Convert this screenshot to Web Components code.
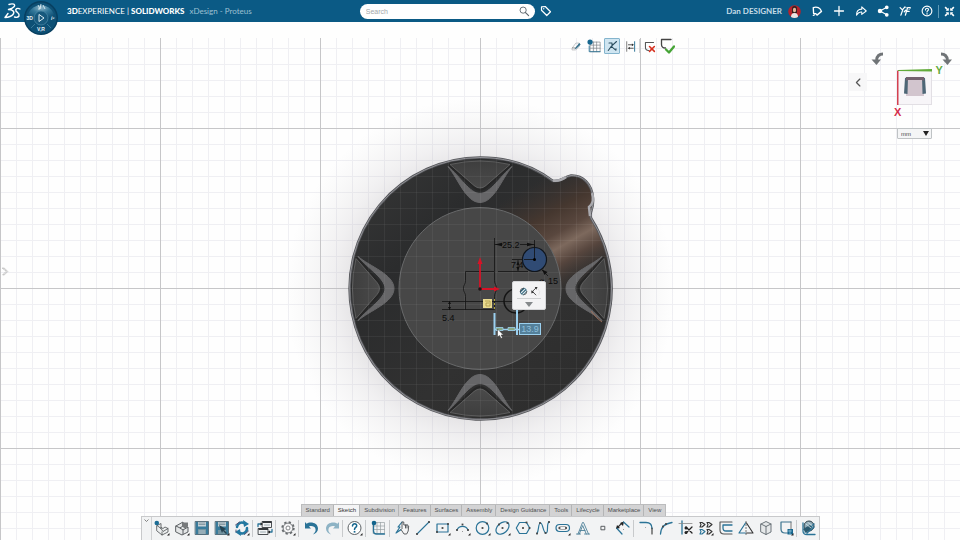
<!DOCTYPE html>
<html lang="en">
<head>
<meta charset="utf-8">
<title>3DEXPERIENCE | SOLIDWORKS xDesign - Proteus</title>
<style>
html,body{margin:0;height:100%}
body{font-family:"Liberation Sans",Arial,sans-serif;background:#fefefe;overflow:hidden}
</style>
</head>
<body>
<xd-app></xd-app>
<script>
const B='#2a7397',D='#4b4f52';
const dot=(x,y)=>`<rect x="${x-.9}" y="${y-.9}" width="1.8" height="1.8" fill="#444"/>`;
const more='<path d="M15.5 13v2.5H13z" fill="#222"/>';
const L=(d,c=B,w=1.1)=>`<path d="${d}" fill="none" stroke="${c}" stroke-width="${w}" stroke-linejoin="round" stroke-linecap="round"/>`;
const F=(d,c)=>`<path d="${d}" fill="${c}"/>`;
const ICONS={
newpart:F('M3 6l4-2 1 4 3-1 3 2v3l-6 3-5-4z','#eceeef')+L('M3 5.5l4-2v4l2 1 2-1.5 3 1.500v3.500l-6 3-5-4zM3 5.500l4 3 2 3 5-3M8 12v3M7 8.500v-1',D,.8)+'<circle cx="2.800" cy="3" r="2.300" fill="#1d6d95"/>'+more,
open:F('M2 6l7-4 5 3v7l-6 3-6-3z','#e4e6e7')+L('M2 6l7-4v4l-3 2 3 2 5-3v5l-6 3-6-3zM2 6l4 2M9 10v4',D,.9)+F('M8 2.500h6v4l-3 2-3-2z','#777a7c')+more,
save:F('M1.500 1.500h13v13h-13z','#397b9b')+F('M4 1.500h8v5H4z','#c7d2d7')+L('M5 3h6M5 4.500h6','#6c8590',.7)+F('M4 9h8v5.500H4z','#7393a0')+L('M5 11h6M5 13h6','#d7e0e4',.7)+L('M1.500 1.500h13v13h-13z','#49606c',.8),
saveas:F('M1.500 1.500h13v13h-13z','#397b9b')+F('M4 1.500h8v5H4z','#c7d2d7')+L('M5 3h6M5 4.500h6','#6c8590',.7)+F('M4 10h8v4.500H4z','#7393a0')+L('M1.500 1.500h13v13h-13z','#49606c',.8)+F('M5 5l7 4-2 1 3 3-1 1-3-3-1 2z','#264250')+more,
refresh:L('M3 7a5 5 0 0 1 7-4M13 8a5 5 0 0 1-7 5','#2378a0',2.500)+F('M9 0l6 4-5 3zM7 16L1 12l5-3z','#2378a0')+L('M1.500 5l4-3M14.500 11l-4 3.500M2 10v2','#557',1)+more,
views:L('M5.500 1.500h9v6h-9z',D,1)+L('M1.500 8.500h9.500v6H1.500z',D,1)+F('M5.500 1h9v2h-9zM1.500 8H11v2H1.500z','#35393c')+L('M1 6.500V4h3M15 9.500V12h-2.500',B,1.300)+F('M3.500 2.500L6 4 3.500 5.500zM13 10.500L10.500 12l2.500 1.500z','#222')+L('M7.500 5h5M3.500 12h5','#87979e',.8),
gear:'<circle cx="8" cy="8" r="5.600" fill="none" stroke="#676b6e" stroke-width="2.200" stroke-dasharray="2.200 2.198"/><circle cx="8" cy="8" r="4.900" fill="#f4f4f5" stroke="#676b6e" stroke-width=".9"/><circle cx="8" cy="8" r="2" fill="#fff" stroke="#676b6e" stroke-width=".8"/>'+more,
undo:F('M1 2l1.500 1.800C6 1 14 2.500 14 8.500c0 3-2 5-5 6 2-2 3-3.500 2.500-5.500C11 6 7 5.500 5 6.500L7 8.500H1z','#2a7397'),
redo:F('M15 2l-1.500 1.800C10 1 2 2.500 2 8.500c0 3 2 5 5 6-2-2-3-3.500-2.500-5.500C5 6 9 5.500 11 6.500L9 8.500h6z','#8db3c5'),
help:'<circle cx="7.500" cy="8" r="6.500" fill="#fff" stroke="#5c6165" stroke-width="1"/>'+L('M5.500 6c0-3 4.500-2.700 4.200-.2C9.500 7.500 7.500 7.300 7.500 9.500','#17678f',1.500)+F('M6.700 11h1.700v1.600H6.700z','#17678f')+more,
grid:L('M2.500 2.500h11v11h-11zM2.500 6h11M2.500 9.500h11M6 2.500v11M9.500 2.500v11','#9aa0a4',.7)+L('M2.500 4v7q0 3 3 3h8',B,1.300)+'<circle cx="3" cy="3" r="2.300" fill="#12648c"/>',
sketch:L('M7 2L3 7l2 0-4 6 6-4',B,1.200)+F('M7 6V2h1.800v3h4.500l1 5-2 4H9L6 9z','#f5f5f5')+L('M7 7V2h1.800v3h3.700l1.200 1-.5 5-1.500 3H9L6 9.500l1-1zM10.500 5v3M12 5v3',D,.9),
line:L('M2 14L14 2')+dot(2,14)+dot(14,2),
rect:L('M2 4h11v8H2z',B,1.200)+dot(13,4)+dot(2,12)+dot(7.500,8)+more,
arc:L('M2 10a6 6 0 0 1 11 0',B,1.200)+dot(2,10)+dot(13,10)+dot(7.500,4.500)+F('M7 11h1v1H7z','#999')+more,
circle:'<circle cx="7.500" cy="8" r="6.300" fill="none" stroke="#2a7397" stroke-width="1.200"/>'+dot(7.500,8)+dot(12,3.500)+more,
ellipse:'<ellipse cx="7.500" cy="8" rx="7.500" ry="5" transform="rotate(-42 7.500 8)" fill="none" stroke="#2a7397" stroke-width="1.200"/>'+dot(7.500,8)+dot(12.500,3)+dot(4,4.500)+more,
poly:L('M4.500 2.500h7l3.200 5.500-3.200 5.500h-7L1.300 8z',B,1.200)+dot(8,8)+dot(11.500,2.500)+dot(14.500,8),
spline:L('M2 13.500C4 11 3 3 5.500 3S8 13 11 13 11 4 14 2',B,1.200)+dot(2,13.500)+dot(5,3)+dot(10.500,13)+dot(14,2),
slot:'<rect x="1" y="4.500" width="13.500" height="7" rx="3.500" fill="none" stroke="#2a7397" stroke-width="1.200"/><rect x="4" y="6.500" width="7.500" height="3" rx="1.500" fill="none" stroke="#777" stroke-width=".6"/>'+dot(4.500,8)+dot(11,8)+more,
letter:L('M1.500 14h4M9.500 14h5M3 14L7.500 2.500h1L13.500 14M11.300 14L7.700 5.500 4.300 14M5 10.500h5','#4d8098',.9),
point:L('M6.300 6.300h3.500v3.500H6.300z',D,.9),
dimension:L('M2 8l5-5','#333',1.100)+F('M1 9l1-4 3 3zM9 1.500L5 3l3 3z','#222')+L('M8.500 2L14 7M2 8.500L7 14',B,1.200)+F('M8 9h1v1H8z','#999'),
fillet:L('M2 2.500h6q6 0 6 6',B,1.300)+L('M14 8v6','#333',1.100)+F('M7 7h1v1H7z','#aaa'),
corner:L('M2.500 14C3 7 6 4 14 2.500',B,1.300)+dot(5,6.500)+dot(8,4),
trim:L('M4 1v13',B,1.300)+L('M1 3.500h13','#888',.8)+L('M8 7l6 6M14 7l-6 6','#222',1.300)+'<circle cx="8" cy="8" r="1.500" fill="#222"/><circle cx="8" cy="12.500" r="1.500" fill="#222"/>',
pattern:['2 2','9 2','2 9','9 9'].map((p,i)=>`<g transform="translate(${p})">${L('M0 .5h2l3 2-3 2.500H0l1-2.500z',i===2?B:'#333',1.100)}</g>`).join('')+more,
offset:L('M14 14H6q-4 0-4-4V2h12','#555',1.100)+L('M14 11H8q-3 0-3-3V5h9',B,1.300),
mirror:L('M7.500 3L1 13h6.500',B,1.200)+L('M8.500 3L15 13H8.500','#333',1.100)+'<path d="M8 1v14" stroke="#555" stroke-width=".8" stroke-dasharray="2 1"/>',
cube:F('M3 4l5-2.500L13 4v8l-5 2.500L3 12z','#e5e8e9')+L('M3 4l5-2.500L13 4v8l-5 2.500L3 12zM3 4l5 2.500L13 4M8 6.500v8','#5d686d',.9),
convert:L('M13 2H3v7q0 4 4 4h3','#3a738e',1.200)+L('M13 2v7','#777',1)+F('M9.500 9h5.500v5.500H9.500z','#17678f')+L('M10.500 11h3M12 10v4','#b6dcec',.6)+more,
appearance:'<circle cx="8" cy="6" r="5" fill="#8fabb7" stroke="#2e4049" stroke-width="1"/>'+L('M2 3v8q0 3.500 4 3.500h8M4 12L13 4M6 13l7-6',B,1.300)+F('M2 9l7-4 2 3-6 5z','#2b5a6f')+L('M5 4l5 4M7 2.500l4 3','#dbe6ea',.8),
tag:L('M2 2.500l5-.5 7 7-5 5-7-7z','#fff',1.600)+'<circle cx="5" cy="5" r=".9" fill="#fff"/>',
search:'<circle cx="6" cy="6" r="4.500" fill="none" stroke="#59636a" stroke-width="1.300"/>'+L('M9.500 9.500L14 14','#59636a',1.600),
note:L('M3 3.500c5-2 9.500.5 11 5L8 13.500l-1.500-2H3.500z','#fff',1.800)+L('M3 14l2-1','#fff',1.500),
plus:L('M8 2v12M2 8h12','#fff',1.700),
share:L('M2 13.500C2 8 5 5.500 9 5.500V2.500L15 8l-6 4.500V9.500C6 9 4 10.500 2 13.500z','#fff',1.400),
nodes:L('M13 3L4 8l9 5','#fff',1.500)+F('M1 8a3 3 0 0 1 6 0 3 3 0 0 1-6 0zM10.500 3a2.500 2.500 0 0 1 5 0 2.500 2.500 0 0 1-5 0zM10.500 13a2.500 2.500 0 0 1 5 0 2.500 2.500 0 0 1-5 0z','#fff'),
tools:L('M1.500 3.500l3 3 3.500-4M5 6.500L2.500 13.500M8.500 13.500l3-10h3.500M10 8.500h3.500M7 9l2-2','#fff',1.700)+L('M9 3l1 1M13.500 6l1-1','#fff',1.300),
question:'<circle cx="8" cy="8" r="6.500" fill="none" stroke="#fff" stroke-width="1.500"/>'+L('M6 6.500c0-3 4.200-2.500 4-.3C9.800 7.500 8 7.500 8 9.300','#fff',1.500)+F('M7.200 11h1.700v1.600H7.200z','#fff'),
collapse:F('M7 7V2.500L5.600 3.900 2.500.8.800 2.500l3.100 3.100L2.500 7zM9 7V2.500l1.400 1.400L13.500.8l1.700 1.700-3.100 3.100L13.500 7zM7 9v4.500l-1.400-1.400-3.100 3.100-1.700-1.700 3.100-3.100L2.500 9zM9 9v4.500l1.400-1.400 3.100 3.100 1.700-1.700-3.100-3.100L13.500 9z','#fff'),
pencil:L('M2 10l5-7h5v5l-5 5H2z','#a5a9ac',.9)+F('M6 10l6-7 2 2-6 6-3 1z','#356f8b')+L('M2 10h4','#777',1),
gridset:L('M4 3.500h11v11H4zM4 7h11M4 10.500h11M7.500 3.500v11M11 3.500v11','#7f8589',.8)+'<circle cx="3.500" cy="3.500" r="3" fill="#17678f"/>'+L('M2.500 8v6.500H15',B,1),
snap:L('M3 14l4-5.500L14 2M7 8.500l6 5M4 4h4v4','#294c5e',1.400)+F('M11 12l3-1v3z','#294c5e'),
width:L('M2.500 1v14','#444',1)+L('M14 1v14',B,1.400)+L('M5 5.500h6M6 10.500h6','#333',1.200)+F('M10 3.500l3 2-3 2zM7 8.500l-3 2 3 2z','#333'),
cancel:L('M13 3H3v6q0 4 4 4','#555',1.300)+L('M8 8l6 6M14 8l-6 6','#d6301f',1.900),
accept:L('M12 1.500H2.500v5q0 3.500 4 3.500','#444',1.300)+L('M7 11.500l3 3 5-6','#46a436',2.300),
smart:'<rect x="3" y="4" width="10" height="8" rx="3" transform="rotate(-45 8 8)" fill="#265d76"/>'+L('M5 9.500l5-5M7 12l5-5','#dfe9ec',1.700)+L('M3 8a5 5 0 0 1 5-5M13 8a5 5 0 0 1-5 5','#444',1),
radial:L('M9 2.500L3.500 8l5 5','#444',1.400)+F('M7 1.500l4 0-2 4zM2 6v5l4-2z','#333')+L('M12 4q4 4 1 9','#ddd',1),
left:L('M10 3L5 8l5 5','#555',1.800),
more:F('M0 4h16L8 14z','#85898b'),
panel:L('M3 2h3l6 6-6 6H3l6-6z','#999',1)
};
const icon=(n,s=16)=>`<svg viewBox="0 0 16 16" width="${s}" height="${s}" aria-hidden="true">${ICONS[n]}</svg>`;
const define=(tag,html,after)=>{
  const t=document.createElement('template');t.innerHTML=html;
  customElements.define(tag,class extends HTMLElement{
    constructor(){super();this.attachShadow({mode:'open'}).append(t.content.cloneNode(true))}
    connectedCallback(){if(after)after(this,this.shadowRoot)}
  });
};
const tools=(list,size='')=>list.split(' ').map(n=>n==='|'?'<i></i>':n==='||'?'<i class="wide"></i>':`<xd-tool icon="${n}" ${size}></xd-tool>`).join('');

define('xd-tool',`<style>
:host{display:block;flex:none;width:var(--tool-w,20px);height:var(--tool-h,20px)}
button{display:flex;align-items:center;justify-content:center;width:100%;height:100%;box-sizing:border-box;padding:0;border:0;background:none}
:host([active]) button{background:#cfe5f1;border:1px solid #84b4cd;border-radius:1px}
svg{display:block;flex:none}
</style><button type="button"></button>`,(h,r)=>{const b=r.querySelector('button');b.setAttribute('aria-label',h.getAttribute('icon'));b.innerHTML=icon(h.getAttribute('icon'),h.getAttribute('size')||16)});

define('xd-compass',`<style>:host{display:block;width:36px;height:36px}button{padding:0;border:0;background:none;display:block}svg{display:block}</style>
<button type="button" aria-label="Compass"><svg width="36" height="36" viewBox="0 0 36 36">
<defs><radialGradient id="g" cx=".5" cy=".15" r=".75"><stop offset="0" stop-color="#8fb6c9"/><stop offset=".45" stop-color="#34799b"/><stop offset="1" stop-color="#0a4b70"/></radialGradient></defs>
<circle cx="18" cy="18" r="17" fill="#073f60"/><circle cx="18" cy="18" r="15.500" fill="#0d5075"/>
<path d="M5 14A14 14 0 0 1 31 14Q27 21 18 21T5 14z" fill="url(#g)"/>
<circle cx="18" cy="18" r="7" fill="#17597d" stroke="#4d8ba9" stroke-width=".7"/>
<path d="M8 28l4-4M28 28l-4-4" stroke="#4d8ba9" stroke-width=".7"/>
<path d="M16 14.500v7l5-3.500z" fill="none" stroke="#dcecf3" stroke-width="1"/>
<path d="M15 5l2 4M18 4l-1 5M20 5l2 4M15 9h2" stroke="#dcecf3" stroke-width=".9" fill="none"/>
<g fill="#e8f3f8" font-family="Liberation Sans,Arial,sans-serif" font-weight="700" font-size="5"><text x="3.500" y="20">3D</text><text x="28" y="20" font-style="italic">i²</text><text x="18" y="31" text-anchor="middle">V,R</text></g>
</svg></button>`);

define('xd-search',`<style>:host{display:block}
form{margin:0;display:flex;align-items:center;height:15px;border-radius:8px;background:#fff;padding:0 3px 0 6px}
input{flex:1;min-width:0;border:0;padding:0;background:none;outline:0;font:7px "Liberation Sans",Arial,sans-serif}
input::placeholder{color:#a2a7aa;opacity:1}xd-tool{--tool-w:14px;--tool-h:14px}</style>
<form role="search"><input type="text" aria-label="Search" placeholder="Search"><xd-tool icon="search" size="11"></xd-tool></form>`);

define('xd-topbar',`<style>
:host{display:flex;align-items:center;height:22px;background:#0b5a85;color:#fff;font-family:Lato,"Open Sans",sans-serif;position:relative;z-index:2}
.side{flex:13;display:flex;align-items:center;min-width:0;white-space:nowrap}
.left{flex:11}
.logo{display:block;margin:0 2px 0 3px}
xd-compass{align-self:flex-start}
.compass{height:22px;margin-right:8px}
.title{font-size:8px;line-height:12px}
.title b{font-weight:900}
.doc{font-size:8px;line-height:12px;color:#9dc0d2;margin-left:5px}
xd-search{width:175px}
.tag{--tool-w:22px}
.right{justify-content:flex-end;padding-right:0}
.right xd-tool{--tool-w:22px}
.user{font-size:8px;font-weight:700;color:#c6dce7;margin-right:6px}
.avatar{display:block;margin-right:5px}
.mid{display:flex;align-items:center}
.bar{width:1px;height:13px;background:#5f9ab7;margin-right:-1px}
.tagwrap{width:0;overflow:visible}
</style>
<div class="side left">
<svg class="logo" width="18" height="20" viewBox="0 0 18 20" fill="none" stroke="#fff" stroke-linecap="round" stroke-linejoin="round" stroke-width="1.400"><path d="M6 3.500C10 2 13 3.500 11 5.800 10 7 8 8 5.500 8.500 10 8.500 12 11 10 13.500 8 16 5 16.300 2 16.500L5 12.500"/><path d="M17 8C14.500 6.500 12 8 13 10 14 11.500 17 12.500 16 15 15 16.500 13 16.500 11.500 16"/></svg>
<div class="compass"><xd-compass></xd-compass></div>
<span class="title"><b>3D</b>EXPERIENCE | <b>SOLIDWORKS</b></span><span class="doc">xDesign - Proteus</span>
</div>
<div class="mid"><xd-search></xd-search><div class="tagwrap"><xd-tool class="tag" icon="tag" size="12"></xd-tool></div></div>
<div class="side right"><span class="user">Dan DESIGNER</span>
<svg class="avatar" width="13" height="13" viewBox="0 0 13 13"><circle cx="6.500" cy="6.500" r="6.300" fill="#b5222c"/><path d="M4 4q0-3 2.500-3T9 4v4H4z" fill="#35201f"/><ellipse cx="6.500" cy="5" rx="1.600" ry="2.200" fill="#e3b69e"/><path d="M3 12q0-4 3.500-4T10 12q-3.500 2-7 0" fill="#e8e6e6"/></svg>
${tools('note plus share nodes tools question','size="12"')}<span class="bar"></span><xd-tool icon="collapse" size="11"></xd-tool></div>`);

define('xd-sketchbar',`<style>:host{display:flex;align-items:center;height:16px}
xd-tool{--tool-w:18px;--tool-h:16px}xd-tool[active]{--tool-w:16px;margin:0 1px}i{width:1px;height:14px;background:#d3d5d6}</style>
<xd-tool icon="pencil" size="11"></xd-tool><xd-tool icon="gridset" size="14"></xd-tool><xd-tool icon="snap" size="12" active></xd-tool><xd-tool icon="width" size="11"></xd-tool><i></i><xd-tool icon="cancel" size="13"></xd-tool><xd-tool icon="accept" size="16"></xd-tool>`);

define('xd-viewcube',`<style>:host{display:block;width:120px}
svg{display:block}
label{display:flex;position:relative;width:35px;margin:3px 0 0 57px}
select{appearance:none;width:35px;height:11px;border:1px solid #bfc3c5;border-radius:1px;background:#f4f5f6;font:6px "Liberation Sans",Arial,sans-serif;color:#444;padding:0 0 0 3px}
label svg{position:absolute;right:3px;top:3px;pointer-events:none}
.fold{position:absolute;left:9px;top:33px;width:18px;height:18px;background:#f7f7f8;--tool-w:18px;--tool-h:18px}</style>
<svg width="120" height="85" viewBox="0 0 120 85">
<path d="M43 14c-4 0-6 2-6.500 6" fill="none" stroke="#707477" stroke-width="2.800"/><path d="M31.500 19.500h9.500l-4.500 5.500z" fill="#707477"/>
<path d="M101 14c4 0 6 2 6.500 6" fill="none" stroke="#707477" stroke-width="2.800"/><path d="M102.500 19.500h9.500l-4.500 5.500z" fill="#707477"/>
<rect x="57.500" y="30.500" width="34" height="34" fill="#f7f5f8" stroke="#e2dfe4"/>
<path d="M67 38h16l1 18H66z" fill="#d2c5ce"/><path d="M65 38l3-1-.5 17-3.500-.5zM82 37l3 1 1 15.500-3.500.5z" fill="#4d6676"/><path d="M66 37h18v4l-2-1H68l-2 1z" fill="#73606e"/>
<path d="M57 31l1.500-1v35H57z" fill="#d44150"/><path d="M58 30l34-1v2.500l-34-.5z" fill="#62aa3a"/>
<g font-family="Liberation Sans,Arial,sans-serif" font-weight="700" font-size="11"><text x="54" y="76" fill="#d52d4b">X</text><text x="95.500" y="33.500" fill="#64ab40">Y</text></g></svg>
<xd-tool class="fold" icon="left" size="11"></xd-tool>
<label><select aria-label="Units"><option>mm</option></select><svg width="6" height="5" viewBox="0 0 6 5"><path d="M0 0h6L3 5z" fill="#222"/></svg></label>`);

define('xd-scene',`<style>:host{display:block}svg{display:block;width:100%;height:100%}text{font-family:"Liberation Sans",Arial,sans-serif;font-size:9px;fill:#0c0c0c}</style>
<svg viewBox="0 0 960 540" preserveAspectRatio="xMidYMid meet" role="img" aria-label="Proteus part, sketch view">
<defs>
<pattern id="minor" x="0" y="288" width="16" height="16" patternUnits="userSpaceOnUse"><path d="M0 .5h16M.5 0v16" stroke="#efeff3" fill="none"/></pattern>
<pattern id="major" x="0" y="288" width="160" height="160" patternUnits="userSpaceOnUse"><path d="M0 .5h160M.5 0v160" stroke="#c6c6c8" fill="none"/></pattern>
<pattern id="over" x="0" y="288" width="16" height="16" patternUnits="userSpaceOnUse"><path d="M0 .5h16M.5 0v16" stroke="#fff" stroke-opacity=".05" fill="none"/></pattern>
<radialGradient id="shade"><stop offset=".62" stop-color="#a8a4aa" stop-opacity=".34"/><stop offset=".76" stop-color="#bbb7bd" stop-opacity=".2"/><stop offset="1" stop-color="#ccc" stop-opacity="0"/></radialGradient>
<linearGradient id="body" x1="0" y1="0" x2="1" y2="1"><stop offset="0" stop-color="#383838"/><stop offset=".3" stop-color="#2b2c2d"/><stop offset=".6" stop-color="#313131"/><stop offset="1" stop-color="#2c2c2c"/></linearGradient>
<linearGradient id="copper" gradientUnits="userSpaceOnUse" x1="538" y1="181" x2="594" y2="280"><stop offset="0" stop-color="#3a322f" stop-opacity="0"/><stop offset=".3" stop-color="#45372f"/><stop offset=".48" stop-color="#59473e"/><stop offset=".6" stop-color="#7d695d"/><stop offset=".73" stop-color="#57463e"/><stop offset="1" stop-color="#332f2d" stop-opacity="0"/></linearGradient>
<linearGradient id="pad" x1="0" y1="0" x2="0" y2="1"><stop offset="0" stop-color="#3e3e3e"/><stop offset="1" stop-color="#4a4a4a"/></linearGradient>
<g id="notch"><path d="M-32-122C-22-110-14-86 0-86S22-110 32-122C20-112 10-95 0-95S-20-112-32-122z" fill="#666668" stroke="#666668" stroke-width="1"/><path d="M-31-124L-6-101Q0-96 6-101L31-124" fill="none" stroke="#262626" stroke-width="2"/><path d="M-30-124L-6-103Q0-98 6-103L30-124Q0-131-30-124z" fill="url(#pad)" stroke="#6c6c6c" stroke-width=".7"/></g>
<clipPath id="ring"><path clip-rule="evenodd" d="M348 157H612V420H348zM561 288.500a81 81 0 1 0-162 0 81 81 0 1 0 162 0z"/></clipPath>
<path id="outline" d="M553 181C532 165 507 157.500 480 157.500A131 131 0 1 0 591 218C589 211 594 210 593 198 592 184 583 175 571 175.500 563 177 561 182 553 181z"/>
<clipPath id="bodyclip"><use href="#outline"/></clipPath>
</defs>
<rect x="-960" y="38" width="2880" height="1000" fill="url(#minor)"/>
<rect x="-960" y="38" width="2880" height="1000" fill="url(#major)"/>
<ellipse cx="480" cy="292" rx="195" ry="195" fill="url(#shade)"/>
<use href="#outline" fill="url(#body)"/>
<g clip-path="url(#bodyclip)"><g clip-path="url(#ring)"><path d="M500 157H620V300H500z" fill="url(#copper)"/></g></g>
<use href="#outline" fill="none" stroke="#55565a" stroke-width="2.500"/><use href="#outline" fill="none" stroke="#a0a0a4" stroke-width=".8"/>
<path d="M553 180.500q7 1 13-3.500M592 193q3 9-3 14l1 9" fill="none" stroke="#a9a9ae" stroke-width="2.500"/>
<circle cx="480" cy="288.500" r="81" fill="#474747" stroke="#68696a" stroke-width="1"/>
<g transform="translate(480 288.500)"><use href="#notch"/><use href="#notch" transform="rotate(90)"/><use href="#notch" transform="rotate(180)"/><use href="#notch" transform="rotate(270)"/></g>
<path d="M591 311Q597 319 602 322" fill="none" stroke="#9a6d59" stroke-width="1"/>
<g clip-path="url(#bodyclip)"><rect x="340" y="150" width="280" height="280" fill="url(#over)"/></g>
<g fill="none" stroke="#141414" stroke-width=".8">
<path d="M465.500 271.500h29v9c0 4 2 4 2 8s-2 4-2 8v13h-29v-13c0-4-2-4-2-8s2-4 2-8z"/>
<path d="M494.500 238v33M494.500 244.500h8M520 244.500h14.500M534.500 240v19.500M512 259.500h22M498 271.500h30M518 260v11M442 301.500h74M442 309.500h24M449.500 301v9M542 270l6 6"/>
<circle cx="516" cy="301" r="12" stroke-width="1.500"/></g>
<circle cx="534.500" cy="259.500" r="12" fill="#304b74" stroke="#10151c" stroke-width="1.200"/><path d="M534.500 244v15.500H524" stroke="#111" stroke-width=".8" fill="none"/><circle cx="534.500" cy="259.500" r="1.500"/>
<path d="M495 244.500l7-1.800v3.600zM534 244.500l-7-1.800v3.600zM518 261l1.500 4h-3zM518 271l1.500-4h-3zM542 269.500l5.500 2.500-3 3zM449.500 301l1.500 3h-3zM449.500 310l1.500-3h-3z" fill="#101010"/>
<text x="502" y="248">25.2</text><text x="511" y="268">7.4</text><text x="539" y="284">⌀</text><text x="548" y="284">15</text><text x="442" y="321">5.4</text>
<path d="M480 289V262M480 289h17" stroke="#d51327" stroke-width="1.800"/><path d="M477.500 264l2.500-7 2.500 7zM494 286.500l6 2.500-6 2.500z" fill="#d51327"/><circle cx="480" cy="289" r="1.800" fill="#201518"/>
<rect x="483" y="299" width="9" height="9" fill="#eadb90"/><path d="M485 301h5v5h-4v-3h3" fill="none" stroke="#a99746" stroke-width=".8"/><path d="M494.500 299v10" stroke="#b1a437" stroke-dasharray="2 2"/>
<path d="M494.500 313v22M517 309v26" stroke="#9bd0ef" stroke-width="2"/><path d="M495 329.500h25" stroke="#9bd0ef" stroke-width="1.500"/><path d="M496 327.500h7v3h-7zM508 327.500h7v3h-7z" fill="#88a887" stroke="#9bd0ef" stroke-width=".8"/>
<path d="M497.500 329v8l2-1.500 1.500 3 1.500-1-1.500-2.500h2.500z" fill="#fff" stroke="#333" stroke-width=".5"/>
</svg>`);

define('xd-context',`<style>:host{display:grid;grid-template-columns:1fr 1fr;box-sizing:border-box;width:34px;height:29px;padding:2px 4px;background:#f3f3f4;border:1px solid #d5d6d8;border-radius:2px}
xd-tool{--tool-w:12px;--tool-h:14px}.all{grid-column:1/3;--tool-w:24px;--tool-h:9px;border-top:1px solid #ced0d1}</style>
<xd-tool icon="smart" size="11"></xd-tool><xd-tool icon="radial" size="11"></xd-tool><xd-tool class="all" icon="more" size="8"></xd-tool>`);

define('xd-dimension',`<style>:host{display:block}input{display:block;box-sizing:border-box;width:22px;height:12px;padding:0 1px;border:1px solid #9bd0ef;outline:0;background:#54809a;color:#8fbfdb;font:9px "Liberation Sans",Arial,sans-serif;text-align:center}</style><input type="text" value="13.9" aria-label="Dimension">`);

define('xd-tabs',`<style>:host{display:flex;height:12px;background:#d3d3d4;border:1px solid #bbbcbd;border-bottom:0;box-sizing:border-box}
button{border:0;box-shadow:inset -1px 0 #b4b5b6;padding:0 4px;background:none;font:6px/11px "Liberation Sans",Arial,sans-serif;color:#4c4f51;white-space:nowrap}
button[aria-selected=true]{background:#f4f4f5;color:#333}button:last-child{box-shadow:none}
button:first-child{background:linear-gradient(135deg,#17678f 3px,#f4f4f5 3px)}
</style>${['Standard','Sketch','Subdivision','Features','Surfaces','Assembly','Design Guidance','Tools','Lifecycle','Marketplace','View'].map(t=>`<button type="button" role="tab" aria-selected="${t==='Sketch'}">${t}</button>`).join('')}`,h=>h.setAttribute('role','tablist'));

define('xd-commandbar',`<style>:host{display:flex;align-items:flex-start;height:24px;box-sizing:border-box;background:#f2f3f4;border:1px solid #c8c9cb;border-bottom:0;--tool-h:21px}
.grip{align-self:stretch;width:10px;box-sizing:border-box;border-right:1px solid #cfd0d2;display:flex;justify-content:center;padding-top:2px}
i{flex:none;box-sizing:border-box;width:3px;height:17px;margin-top:3px;border-left:1px solid #c8cacc}i.wide{width:4px}</style>
<div class="grip"><svg width="5" height="4" viewBox="0 0 5 4"><path d="M.5.500l2 2 2-2" fill="none" stroke="#666" stroke-width=".8"/></svg></div>
${tools('newpart open save saveas refresh | views | gear || undo redo | help || grid || sketch line rect arc circle ellipse poly spline slot letter point dimension | fillet corner trim pattern offset mirror cube convert | appearance')}`);

define('xd-dock',`<style>:host{display:flex;flex-direction:column;align-items:flex-start}xd-tabs{margin-left:160px}</style><xd-tabs></xd-tabs><xd-commandbar></xd-commandbar>`);

define('xd-app',`<style>
:host{display:flex;flex-direction:column;height:100vh;position:relative;overflow:hidden}
xd-scene{position:absolute;inset:0}
main{flex:1;display:flex;flex-direction:column;justify-content:space-between}
xd-sketchbar{position:relative;margin:16px 0 0 calc(50% + 87px)}
xd-viewcube{position:absolute;right:0;top:40px}
xd-context{position:absolute;left:calc(50% + 32px);top:calc(50% + 11px)}
xd-dimension{position:absolute;left:calc(50% + 39px);top:calc(50% + 53px)}
xd-dock{position:relative;align-self:center}
.panel{position:absolute;left:0;top:calc(50% - 8px);--tool-w:10px;--tool-h:18px}
</style>
<xd-scene></xd-scene><xd-topbar></xd-topbar>
<main><xd-sketchbar></xd-sketchbar><xd-dock></xd-dock></main>
<xd-viewcube></xd-viewcube><xd-context></xd-context><xd-dimension></xd-dimension><xd-tool class="panel" icon="panel" size="9"></xd-tool>`);
</script>
</body>
</html>
